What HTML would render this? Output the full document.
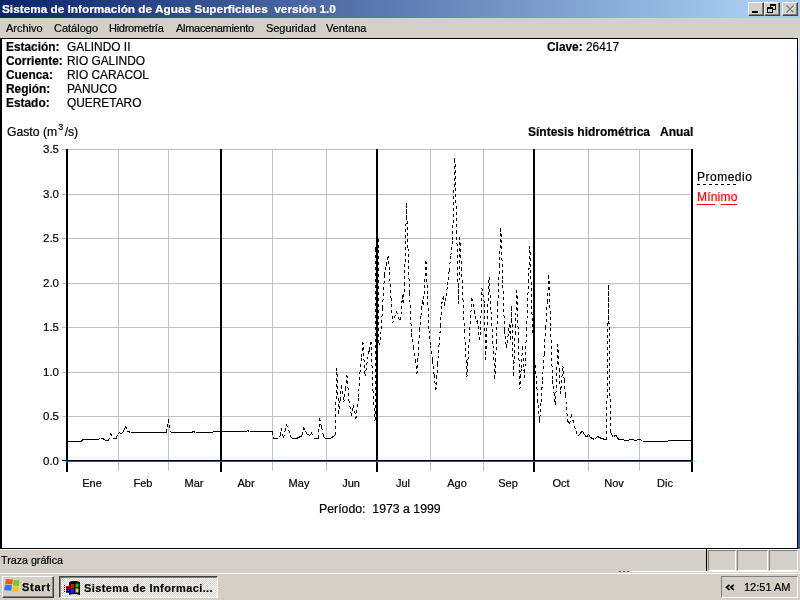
<!DOCTYPE html>
<html><head><meta charset="utf-8">
<style>
*{margin:0;padding:0;box-sizing:border-box}
html,body{width:800px;height:600px;overflow:hidden;background:#d4d0c8;font-family:"Liberation Sans",sans-serif;color:#000}
.a{position:absolute;white-space:nowrap}
.t{will-change:transform;-webkit-text-stroke:0.2px currentColor}
.tb{top:2px;width:16px;height:14px;background:#d4d0c8;border-top:1px solid #fff;border-left:1px solid #fff;border-right:1px solid #404040;border-bottom:1px solid #404040;box-shadow:inset -1px -1px 0 #808080}
</style></head><body>
<div class="a" style="left:0;top:0;width:800px;height:18px;background:linear-gradient(to right,#0a246a,#a6caf0 744px)"></div>
<div class="a tb" style="left:748px"></div>
<div class="a tb" style="left:764px"></div>
<div class="a tb" style="left:782px"></div>
<div class="a" style="left:752px;top:11px;width:6px;height:2px;background:#000"></div>
<div class="a" style="left:770px;top:4px;width:6px;height:6px;border:1px solid #000;border-top-width:2px"></div>
<div class="a" style="left:767px;top:7px;width:6px;height:6px;border:1px solid #000;border-top-width:2px;background:#d4d0c8"></div>
<svg class="a" style="left:785px;top:4px" width="10" height="9"><path d="M1.5 1.5L8.5 8.5M8.5 1.5L1.5 8.5" stroke="#fff" transform="translate(1,1)"/><path d="M1.5 1.5L8.5 8.5M8.5 1.5L1.5 8.5" stroke="#808080" stroke-width="1.3"/></svg>
<div class="a" style="left:0;top:38px;width:798px;height:511px;background:#fff;border:2px solid #000;border-width:1px 1px 1px 2px"></div>
<div class="a" style="left:798px;top:38px;width:2px;height:511px;background:linear-gradient(to bottom,#d8e0f0,#b0c6e4 28%,#5484c4 57%,#3464b0 75%,#2a58a8)"></div>
<div class="a" style="left:0;top:549px;width:800px;height:1px;background:#fff"></div>
<div class="a" style="left:706px;top:549px;width:1px;height:22px;background:#000"></div>
<div class="a" style="left:708px;top:550px;width:28px;height:21px;border:1px solid;border-color:#808080 #fff #fff #808080"></div>
<div class="a" style="left:737px;top:550px;width:31px;height:21px;border:1px solid;border-color:#808080 #fff #fff #808080"></div>
<div class="a" style="left:769px;top:550px;width:29px;height:21px;border:1px solid;border-color:#808080 #fff #fff #808080"></div>
<div class="a" style="left:0;top:573px;width:800px;height:1px;background:#fff"></div>
<div class="a" style="left:630px;top:571px;width:170px;height:1px;background:#fff"></div><div class="a" style="left:619px;top:571px;width:10px;height:1px;background:repeating-linear-gradient(to right,#606060 0 2px,transparent 2px 4px)"></div>
<div class="a" style="left:2px;top:576px;width:52px;height:22px;border:1px solid;border-color:#fff #404040 #404040 #fff;box-shadow:inset -1px -1px 0 #808080"></div>
<div class="a" style="left:59px;top:576px;width:159px;height:22px;border:1px solid;border-color:#404040 #fff #fff #404040;box-shadow:inset 1px 1px 0 #808080;background:repeating-conic-gradient(#fff 0 25%,#d4d0c8 0 50%) 0 0/2px 2px"></div>
<div class="a" style="left:721px;top:576px;width:77px;height:22px;border:1px solid;border-color:#808080 #fff #fff #808080"></div>
<svg class="a" style="left:724px;top:582px" width="14" height="10"><path d="M5.5 2.8L2.5 5.3L5.5 7.8M9.8 2.8L6.8 5.3L9.8 7.8" stroke="#000" stroke-width="1.7" fill="none"/></svg>
<svg class="a" style="left:0;top:570px" width="100" height="30" shape-rendering="geometricPrecision"><g transform="translate(0,-570)">
<path d="M6 579L13 579.5L12.2 584.5L5.2 584Z" fill="#f05a18"/><path d="M13.6 580L19.6 580.6L18.8 586L12.8 585.5Z" fill="#78c828"/><path d="M5 584.8L12 585.3L11.2 590.8L4.2 590.3Z" fill="#3a70f0"/><path d="M12.6 586.2L18.6 586.8L17.8 592.2L11.8 591.7Z" fill="#f8c418"/>
<path d="M69 582Q74 580 80 582V595Q74 593 69 595Z" fill="#000"/><path d="M71 584h3v4h-3zM71 589h3v4h-3z" fill="#f00"/><path d="M71 589h3v4h-3z" fill="#0030ff"/><path d="M75.5 583.5h3v4h-3z" fill="#00d000"/><path d="M75.5 588.5h3v4h-3z" fill="#f0e000"/>
<path d="M64.5 585v8" stroke="#000" stroke-dasharray="1 1"/><path d="M66 586.5h3M66 588.5h3" stroke="#f00"/><path d="M66 590.5h3M66 592.5h3" stroke="#0040ff"/><path d="M66 587.5h3M66 589.5h3M66 591.5h3" stroke="#000"/>
</g></svg>
<svg class="a" style="left:0;top:0" width="800" height="600" shape-rendering="crispEdges"><path d="M62 149.5H692M62 194.5H692M62 238.5H692M62 283.5H692M62 327.5H692M62 372.5H692M62 416.5H692M118.5 149V471M168.5 149V471M272.5 149V471M326.5 149V471M430.5 149V471M483.5 149V471M588.5 149V471M639.5 149V471" stroke="#c0c0c0" stroke-width="1" fill="none"/><path d="M67.5 441.5L69.2 441.5M69.2 441.5L71 441.5M71 441.5L72.8 441.5M72.8 441.5L74.5 441.5M74.5 441.5L76.2 441.5M76.2 441.5L78 441.5M78 441.5L79.8 441.5M79.8 441.5L81.5 441.5M81.5 441.5L82.5 439.5M82.5 439.5L84.2 439.5M84.2 439.5L85.8 439.5M85.8 439.5L87.5 439.5M87.5 439.5L89.2 439.5M89.2 439.5L90.8 439.5M90.8 439.5L92.5 439.5M92.5 439.5L94.2 439.5M94.2 439.5L95.8 439.5M95.8 439.5L97.5 439.5M97.5 439.5L99 439M99 439L100.5 438.5M100.5 438.5L102 438.5M102 438.5L103.5 438.5M103.5 438.5L104.5 440.5M104.5 440.5L106.5 440.5M106.5 440.5L108.5 440.5M108.5 440.5L110.5 433M110.5 433L112.5 438.5M112.5 438.5L114 438.5M114 438.5L115.5 438.5M115.5 438.5L116.5 438M116.5 438L117.5 434.5M117.5 434.5L119.5 432.5M119.5 432.5L121.5 434M121.5 434L123 431.8M123 431.8L124.5 429.5M124.5 429.5L125.5 426.1M125.5 426.1L127.5 431.1M127.5 431.1L129 431.8M129 431.8L130.5 432.5M130.5 432.5L132.2 432.5M132.2 432.5L133.9 432.5M133.9 432.5L135.6 432.5M135.6 432.5L137.4 432.5M137.4 432.5L139.1 432.5M139.1 432.5L140.8 432.5M140.8 432.5L142.5 432.5M142.5 432.5L144.2 432.5M144.2 432.5L145.9 432.5M145.9 432.5L147.6 432.5M147.6 432.5L149.4 432.5M149.4 432.5L151.1 432.5M151.1 432.5L152.8 432.5M152.8 432.5L154.5 432.5M154.5 432.5L156.2 432.5M156.2 432.5L157.9 432.5M157.9 432.5L159.6 432.5M159.6 432.5L161.4 432.5M161.4 432.5L163.1 432.5M163.1 432.5L164.8 432.5M164.8 432.5L166.5 432.5M166.5 432.5L168.5 419.5M168.5 419.5L170.5 432.5M170.5 432.5L172.2 432.5M172.2 432.5L174 432.5M174 432.5L175.8 432.5M175.8 432.5L177.5 432.5M177.5 432.5L179.2 432.5M179.2 432.5L181 432.5M181 432.5L182.8 432.5M182.8 432.5L184.5 432.5M184.5 432.5L186.2 432.5M186.2 432.5L188 432.5M188 432.5L189.8 432.5M189.8 432.5L191.5 432.5M191.5 432.5L193.5 431.5M193.5 431.5L195.5 432.5M195.5 432.5L197.2 432.5M197.2 432.5L198.9 432.5M198.9 432.5L200.6 432.5M200.6 432.5L202.3 432.5M202.3 432.5L204 432.5M204 432.5L205.7 432.5M205.7 432.5L207.4 432.5M207.4 432.5L209.1 432.5M209.1 432.5L210.8 432.5M210.8 432.5L212.5 432.5M212.5 432.5L213.5 431.5M213.5 431.5L215.2 431.5M215.2 431.5L217 431.5M217 431.5L218.7 431.5M218.7 431.5L220.4 431.5M220.4 431.5L222.2 431.5M222.2 431.5L223.9 431.5M223.9 431.5L225.7 431.5M225.7 431.5L227.4 431.5M227.4 431.5L229.1 431.5M229.1 431.5L230.9 431.5M230.9 431.5L232.6 431.5M232.6 431.5L234.3 431.5M234.3 431.5L236.1 431.5M236.1 431.5L237.8 431.5M237.8 431.5L239.6 431.5M239.6 431.5L241.3 431.5M241.3 431.5L243 431.5M243 431.5L244.8 431.5M244.8 431.5L246.5 431.5M246.5 431.5L247.5 430.5M247.5 430.5L249.5 431.5M249.5 431.5L251.3 431.5M251.3 431.5L253 431.5M253 431.5L254.8 431.5M254.8 431.5L256.6 431.5M256.6 431.5L258.3 431.5M258.3 431.5L260.1 431.5M260.1 431.5L261.9 431.5M261.9 431.5L263.7 431.5M263.7 431.5L265.4 431.5M265.4 431.5L267.2 431.5M267.2 431.5L269 431.5M269 431.5L270.7 431.5M270.7 431.5L272.5 431.5M272.5 431.5L273.5 438.5M273.5 438.5L275 438.8M275 438.8L276.5 439M276.5 439L278.5 437.5M278.5 437.5L280.5 435.5M280.5 435.5L281.5 428.5M281.5 428.5L283.5 438M283.5 438L285 431.2M285 431.2L286.5 424.5M286.5 424.5L288.5 430M288.5 430L290.5 435.5M290.5 435.5L291.5 438.5M291.5 438.5L293.2 438.5M293.2 438.5L294.8 438.5M294.8 438.5L296.5 438.5M296.5 438.5L298.2 437.7M298.2 437.7L299.8 436.8M299.8 436.8L301.5 436M301.5 436L302.5 435.5M302.5 435.5L303.5 427.5M303.5 427.5L305.5 431M305.5 431L307.5 434.5M307.5 434.5L309 435M309 435L310.5 435.5M310.5 435.5L311.5 432.5M311.5 432.5L313.5 438.5M313.5 438.5L315.2 438.5M315.2 438.5L316.8 438.5M316.8 438.5L318.5 438.5M318.5 438.5L319.5 418M319.5 418L321.5 427M321.5 427L323.5 436M323.5 436L325.5 439M325.5 439L327.2 438.8M327.2 438.8L328.8 438.7M328.8 438.7L330.5 438.5M330.5 438.5L332 437.3M332 437.3L333.5 436.2M333.5 436.2L335 435M335 435L336.9 368.5M336.9 368.5L338.8 414.5M338.8 414.5L340.1 400M340.1 400L341.5 385.5M341.5 385.5L343.8 402.5M343.8 402.5L345.4 389M345.4 389L347 375.5M347 375.5L349 400.5M349 400.5L351.5 416.5M351.5 416.5L353.5 405.5M353.5 405.5L356 418.5M356 418.5L358.5 397.5M358.5 397.5L360 372.5M360 372.5L361.4 357M361.4 357L362.9 341.5M362.9 341.5L365 376.5M365 376.5L367.5 359.5M367.5 359.5L369.2 350.5M369.2 350.5L371 341.5M371 341.5L373 390.5M373 390.5L375 420.5M375 420.5L375.8 250.5M375.8 250.5L377.5 221.5M377.5 221.5L378.5 250.5M378.5 250.5L379 345.5M379 345.5L380.5 340.5M380.5 340.5L382.5 308M382.5 308L384.5 275.5M384.5 275.5L386.2 265.5M386.2 265.5L388 255.5M388 255.5L389.5 272.5M389.5 272.5L391 298M391 298L392.5 323.5M392.5 323.5L394.5 317.5M394.5 317.5L396.5 311.5M396.5 311.5L398.5 318.5M398.5 318.5L400.5 320.5M400.5 320.5L402.5 295.5M402.5 295.5L403.5 303.5M403.5 303.5L404.5 285.5M404.5 285.5L406.5 203.5M406.5 203.5L408 248.5M408 248.5L409.5 293.5M409.5 293.5L411.5 333.5M411.5 333.5L413.3 346.8M413.3 346.8L415.2 360.2M415.2 360.2L417 373.5M417 373.5L419.5 330.5M419.5 330.5L421 315.5M421 315.5L422.5 300.5M422.5 300.5L423.5 305.5M423.5 305.5L426 261.5M426 261.5L427.5 296M427.5 296L429 330.5M429 330.5L430.7 345.5M430.7 345.5L432.4 360.5M432.4 360.5L434.2 375.5M434.2 375.5L435.9 390.5M435.9 390.5L437.5 364.5M437.5 364.5L439 345.5M439 345.5L440.5 326.5M440.5 326.5L441.5 304.5M441.5 304.5L443.5 296.5M443.5 296.5L444.5 306.5M444.5 306.5L446 296M446 296L447.5 285.5M447.5 285.5L449.2 270.5M449.2 270.5L450.8 255.5M450.8 255.5L452.5 240.5M452.5 240.5L454.9 158.5M454.9 158.5L456.7 231.5M456.7 231.5L458.5 304.5M458.5 304.5L459.9 237.5M459.9 237.5L461.4 268.5M461.4 268.5L463 299.5M463 299.5L464.5 330.5M464.5 330.5L466.9 377.5M466.9 377.5L468.7 348M468.7 348L470.5 318.5M470.5 318.5L471.9 298.5M471.9 298.5L473.2 304.5M473.2 304.5L474.5 310.5M474.5 310.5L476.5 322.5M476.5 322.5L477.5 320.5M477.5 320.5L479.5 340.5M479.5 340.5L480.5 330.5M480.5 330.5L482 288.5M482 288.5L484.5 304.5M484.5 304.5L485.5 360.5M485.5 360.5L487.3 319M487.3 319L489.1 277.5M489.1 277.5L491 311.5M491 311.5L493 345.5M493 345.5L494.9 379.5M494.9 379.5L496.4 341.8M496.4 341.8L497.9 304M497.9 304L499.4 266.2M499.4 266.2L500.9 228.5M500.9 228.5L502.7 279.5M502.7 279.5L504.5 330.5M504.5 330.5L506.5 348.5M506.5 348.5L508 336.5M508 336.5L509.5 324.5M509.5 324.5L510.5 340.5M510.5 340.5L511.5 306.5M511.5 306.5L513.5 376.5M513.5 376.5L515.2 333.5M515.2 333.5L516.9 290.5M516.9 290.5L518.4 340M518.4 340L519.9 389.5M519.9 389.5L521.2 368M521.2 368L522.5 346.5M522.5 346.5L524.5 378.5M524.5 378.5L526.5 330.5M526.5 330.5L528.2 288.5M528.2 288.5L529.9 246.5M529.9 246.5L531.2 288.5M531.2 288.5L532.5 330.5M532.5 330.5L534.2 353M534.2 353L536 375.5M536 375.5L537.8 399.5M537.8 399.5L539.5 423.5M539.5 423.5L541 402M541 402L542.5 380.5M542.5 380.5L544.1 354.2M544.1 354.2L545.7 328M545.7 328L547.3 301.8M547.3 301.8L548.9 275.5M548.9 275.5L550.7 328M550.7 328L552.5 380.5M552.5 380.5L554 393M554 393L555.5 405.5M555.5 405.5L557.9 344.5M557.9 344.5L559.2 369.5M559.2 369.5L560.5 394.5M560.5 394.5L562.9 365.5M562.9 365.5L564.2 380.5M564.2 380.5L565.5 395.5M565.5 395.5L567.5 420.5M567.5 420.5L569.5 424M569.5 424L571.5 414.5M571.5 414.5L573 420.5M573 420.5L574.5 426.5M574.5 426.5L576 431.5M576 431.5L577.5 436.5M577.5 436.5L579.2 434.7M579.2 434.7L580.8 432.8M580.8 432.8L582.5 431M582.5 431L584.5 434.2M584.5 434.2L586.5 437.5M586.5 437.5L588.5 434M588.5 434L590.5 437.5M590.5 437.5L592.5 438.5M592.5 438.5L594.5 439.5M594.5 439.5L596 438M596 438L597.5 436.5M597.5 436.5L599 437.2M599 437.2L600.5 438M600.5 438L602 438.5M602 438.5L603.5 439M603.5 439L605 439.5M605 439.5L606.5 440M606.5 440L608.5 285.5M608.5 285.5L610.5 432.5M610.5 432.5L612 435M612 435L613.5 437.5M613.5 437.5L615.5 435M615.5 435L617 437M617 437L618.5 439M618.5 439L620.5 439.5M620.5 439.5L622.2 439.8M622.2 439.8L624 440M624 440L625.8 440.2M625.8 440.2L627.5 440.5M627.5 440.5L629.2 440M629.2 440L630.8 439.4M630.8 439.4L632.5 438.9M632.5 438.9L634 440M634 440L635.5 441.1M635.5 441.1L637.5 439.7M637.5 439.7L639 439.6M639 439.6L640.5 439.5M640.5 439.5L642.5 441.5M642.5 441.5L644.2 441.5M644.2 441.5L645.8 441.5M645.8 441.5L647.5 441.5M647.5 441.5L649.2 441.5M649.2 441.5L650.8 441.5M650.8 441.5L652.5 441.5M652.5 441.5L654.2 441.5M654.2 441.5L655.8 441.5M655.8 441.5L657.5 441.5M657.5 441.5L659.2 441.5M659.2 441.5L660.8 441.5M660.8 441.5L662.5 441.5M662.5 441.5L664.2 441.5M664.2 441.5L665.8 441.5M665.8 441.5L667.5 441.5M667.5 441.5L668.5 440.5M668.5 440.5L670.3 440.5M670.3 440.5L672 440.5M672 440.5L673.8 440.5M673.8 440.5L675.6 440.5M675.6 440.5L677.3 440.5M677.3 440.5L679.1 440.5M679.1 440.5L680.9 440.5M680.9 440.5L682.7 440.5M682.7 440.5L684.4 440.5M684.4 440.5L686.2 440.5M686.2 440.5L688 440.5M688 440.5L689.7 440.5M689.7 440.5L691.5 440.5" stroke="#000" stroke-width="1" stroke-dasharray="3 3" fill="none"/><rect x="66" y="149" width="2" height="323" fill="#000"/><rect x="220" y="149" width="2" height="323" fill="#000"/><rect x="376" y="149" width="2" height="323" fill="#000"/><rect x="533" y="149" width="2" height="323" fill="#000"/><rect x="691" y="149" width="2" height="323" fill="#000"/><rect x="62" y="460" width="631" height="1" fill="#000"/><rect x="66" y="461" width="627" height="1" fill="#f00"/><path d="M697 184.5H737" stroke="#000" stroke-dasharray="3 3"/><path d="M697 204.5H737" stroke="#f00" stroke-dasharray="18 6"/></svg>
<div class="a t" style="top:4.01px;font-size:11.8px;line-height:11.8px;left:1.5px;font-weight:bold;color:#fff;">Sistema de Información de Aguas Superficiales&nbsp; versión 1.0</div>
<div class="a t" style="top:22.69px;font-size:11px;line-height:11px;left:6px;letter-spacing:0px;">Archivo</div>
<div class="a t" style="top:22.69px;font-size:11px;line-height:11px;left:53.5px;letter-spacing:0px;">Catálogo</div>
<div class="a t" style="top:22.69px;font-size:11px;line-height:11px;left:108.5px;letter-spacing:-0.27px;">Hidrometría</div>
<div class="a t" style="top:22.69px;font-size:11px;line-height:11px;left:176px;letter-spacing:-0.29px;">Almacenamiento</div>
<div class="a t" style="top:22.69px;font-size:11px;line-height:11px;left:265.5px;letter-spacing:-0.05px;">Seguridad</div>
<div class="a t" style="top:22.69px;font-size:11px;line-height:11px;left:325.5px;letter-spacing:0px;">Ventana</div>
<div class="a t" style="top:41.93px;font-size:11.9px;line-height:11.9px;left:6px;font-weight:bold;">Estación:</div>
<div class="a t" style="top:41.93px;font-size:11.9px;line-height:11.9px;left:67px;">GALINDO II</div>
<div class="a t" style="top:55.93px;font-size:11.9px;line-height:11.9px;left:6px;font-weight:bold;">Corriente:</div>
<div class="a t" style="top:55.93px;font-size:11.9px;line-height:11.9px;left:67px;">RIO GALINDO</div>
<div class="a t" style="top:69.93px;font-size:11.9px;line-height:11.9px;left:6px;font-weight:bold;">Cuenca:</div>
<div class="a t" style="top:69.93px;font-size:11.9px;line-height:11.9px;left:67px;">RIO CARACOL</div>
<div class="a t" style="top:83.93px;font-size:11.9px;line-height:11.9px;left:6px;font-weight:bold;">Región:</div>
<div class="a t" style="top:83.93px;font-size:11.9px;line-height:11.9px;left:67px;">PANUCO</div>
<div class="a t" style="top:97.93px;font-size:11.9px;line-height:11.9px;left:6px;font-weight:bold;">Estado:</div>
<div class="a t" style="top:97.93px;font-size:11.9px;line-height:11.9px;left:67px;">QUERETARO</div>
<div class="a t" style="top:41.93px;font-size:11.9px;line-height:11.9px;left:546.5px;"><b>Clave:</b> 26417</div>
<div class="a t" style="top:125.67px;font-size:12.2px;line-height:12.2px;left:7px;">Gasto (m<span style="position:relative;top:-6px;font-size:9px;margin:0 1.5px 0 1px">3</span>/s)</div>
<div class="a t" style="top:125.84px;font-size:12px;line-height:12px;left:528px;font-weight:bold;">Síntesis hidrométrica</div>
<div class="a t" style="top:125.84px;font-size:12px;line-height:12px;left:659.5px;font-weight:bold;">Anual</div>
<div class="a t" style="top:144.27px;font-size:11.5px;line-height:11.5px;right:741px;">3.5</div>
<div class="a t" style="top:189.27px;font-size:11.5px;line-height:11.5px;right:741px;">3.0</div>
<div class="a t" style="top:233.27px;font-size:11.5px;line-height:11.5px;right:741px;">2.5</div>
<div class="a t" style="top:278.27px;font-size:11.5px;line-height:11.5px;right:741px;">2.0</div>
<div class="a t" style="top:322.27px;font-size:11.5px;line-height:11.5px;right:741px;">1.5</div>
<div class="a t" style="top:367.27px;font-size:11.5px;line-height:11.5px;right:741px;">1.0</div>
<div class="a t" style="top:411.27px;font-size:11.5px;line-height:11.5px;right:741px;">0.5</div>
<div class="a t" style="top:456.27px;font-size:11.5px;line-height:11.5px;right:741px;">0.0</div>
<div class="a t" style="left:72.0px;width:40px;text-align:center;top:477.69px;font-size:11px;line-height:11px">Ene</div>
<div class="a t" style="left:123.0px;width:40px;text-align:center;top:477.69px;font-size:11px;line-height:11px">Feb</div>
<div class="a t" style="left:174.0px;width:40px;text-align:center;top:477.69px;font-size:11px;line-height:11px">Mar</div>
<div class="a t" style="left:226.0px;width:40px;text-align:center;top:477.69px;font-size:11px;line-height:11px">Abr</div>
<div class="a t" style="left:279.0px;width:40px;text-align:center;top:477.69px;font-size:11px;line-height:11px">May</div>
<div class="a t" style="left:331.0px;width:40px;text-align:center;top:477.69px;font-size:11px;line-height:11px">Jun</div>
<div class="a t" style="left:383.0px;width:40px;text-align:center;top:477.69px;font-size:11px;line-height:11px">Jul</div>
<div class="a t" style="left:436.5px;width:40px;text-align:center;top:477.69px;font-size:11px;line-height:11px">Ago</div>
<div class="a t" style="left:488.0px;width:40px;text-align:center;top:477.69px;font-size:11px;line-height:11px">Sep</div>
<div class="a t" style="left:540.5px;width:40px;text-align:center;top:477.69px;font-size:11px;line-height:11px">Oct</div>
<div class="a t" style="left:593.5px;width:40px;text-align:center;top:477.69px;font-size:11px;line-height:11px">Nov</div>
<div class="a t" style="left:645.0px;width:40px;text-align:center;top:477.69px;font-size:11px;line-height:11px">Dic</div>
<div class="a t" style="top:502.59px;font-size:12.3px;line-height:12.3px;left:318.5px;">Período:&nbsp; 1973 a 1999</div>
<div class="a t" style="top:170.84px;font-size:12px;line-height:12px;left:697px;letter-spacing:0.5px;">Promedio</div>
<div class="a t" style="top:190.84px;font-size:12px;line-height:12px;left:697px;color:#f00;letter-spacing:0.2px;">Mínimo</div>
<div class="a t" style="top:555.44px;font-size:10.7px;line-height:10.7px;left:1px;">Traza gráfica</div>
<div class="a t" style="top:581.69px;font-size:11px;line-height:11px;left:21.5px;font-weight:bold;letter-spacing:0.75px;-webkit-text-stroke:0.25px #000;">Start</div>
<div class="a t" style="top:582.69px;font-size:11px;line-height:11px;left:84px;font-weight:bold;letter-spacing:0.4px;-webkit-text-stroke:0.2px #000;">Sistema de Informaci...</div>
<div class="a t" style="top:581.69px;font-size:11px;line-height:11px;left:744px;">12:51 AM</div>

</body></html>
